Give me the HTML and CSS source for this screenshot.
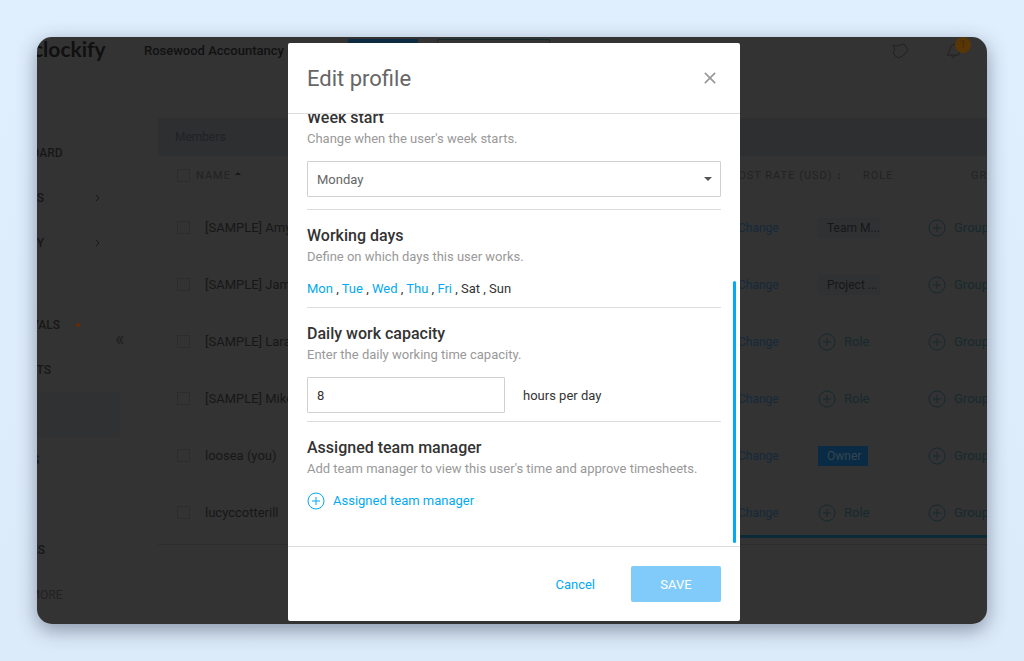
FILE: index.html
```html
<!DOCTYPE html>
<html lang="en">
<head>
  <meta charset="UTF-8" />
  <meta name="viewport" content="width=device-width, initial-scale=1.0" />
  <title>Edit profile</title>
  <link rel="stylesheet" href="styles.css">
</head>
<body>
  <!-- shared icons -->
  <svg class="sprite" aria-hidden="true">
    <symbol id="plus" viewBox="0 0 18 18">
      <circle cx="9" cy="9" r="8" />
      <path d="M9 5v8M5 9h8" />
    </symbol>
    <symbol id="chevron" viewBox="0 0 6 10">
      <path d="M1 2l3 3-3 3" />
    </symbol>
  </svg>

  <div class="window">
    <header class="topbar">
      <span class="logo">clockify</span>
      <span class="company">Rosewood Accountancy</span>
      <span class="promo"></span>
      <span class="trial"></span>
      <div class="topbar-icons">
        <svg class="icon" width="18" height="16" viewBox="0 0 18 16">
          <path d="M2 2l4 1 3-1 4-1 4 6-4 5-5 3-4-2-2-4 2-2z" />
        </svg>
        <div class="bell">
          <svg class="icon" width="14" height="16" viewBox="0 0 14 16">
            <path d="M1 12l2-3 2-6 4-2 4 8v3zM5 12l2 3 3-3" />
          </svg>
          <span class="badge">1</span>
        </div>
      </div>
    </header>

    <div class="app">
      <nav class="sidebar">
        <a href="#" class="nav-item">DASHBOARD</a>
        <a href="#" class="nav-item">REPORTS <svg class="chevron"><use href="#chevron" /></svg></a>
        <a href="#" class="nav-item">ACTIVITY <svg class="chevron"><use href="#chevron" /></svg></a>
        <a href="#" class="nav-item manage">APPROVALS <span class="dot"></span></a>
        <a href="#" class="nav-item">PROJECTS</a>
        <a href="#" class="nav-item active" aria-label="Team"></a>
        <a href="#" class="nav-item">CLIENTS</a>
        <a href="#" class="nav-item" aria-label="Tags"></a>
        <a href="#" class="nav-item">INVOICES</a>
        <a href="#" class="nav-item more">SHOW MORE</a>
        <span class="collapse">«</span>
      </nav>

      <main class="members">
        <div class="members-title">Members</div>
        <table>
          <thead>
            <tr>
              <th class="col-check"><input type="checkbox" aria-label="Select all" /></th>
              <th class="col-name">NAME <span class="sort"></span></th>
              <th class="col-rate">COST RATE (USD) ↕</th>
              <th class="col-role">ROLE</th>
              <th class="col-group">GROUP</th>
            </tr>
          </thead>
          <tbody>
            <tr>
              <td><input type="checkbox" aria-label="Select Amy" /></td>
              <td>[SAMPLE] Amy</td>
              <td><a href="#" class="change">Change</a></td>
              <td><span class="tag">Team M...</span></td>
              <td><a href="#" class="add"><svg><use href="#plus" /></svg>Group</a></td>
            </tr>
            <tr>
              <td><input type="checkbox" aria-label="Select James" /></td>
              <td>[SAMPLE] James</td>
              <td><a href="#" class="change">Change</a></td>
              <td><span class="tag">Project ...</span></td>
              <td><a href="#" class="add"><svg><use href="#plus" /></svg>Group</a></td>
            </tr>
            <tr>
              <td><input type="checkbox" aria-label="Select Lara" /></td>
              <td>[SAMPLE] Lara</td>
              <td><a href="#" class="change">Change</a></td>
              <td><a href="#" class="add"><svg><use href="#plus" /></svg>Role</a></td>
              <td><a href="#" class="add"><svg><use href="#plus" /></svg>Group</a></td>
            </tr>
            <tr>
              <td><input type="checkbox" aria-label="Select Mike" /></td>
              <td>[SAMPLE] Mike</td>
              <td><a href="#" class="change">Change</a></td>
              <td><a href="#" class="add"><svg><use href="#plus" /></svg>Role</a></td>
              <td><a href="#" class="add"><svg><use href="#plus" /></svg>Group</a></td>
            </tr>
            <tr>
              <td><input type="checkbox" aria-label="Select loosea" /></td>
              <td>loosea (you)</td>
              <td><a href="#" class="change">Change</a></td>
              <td><span class="tag owner">Owner</span></td>
              <td><a href="#" class="add"><svg><use href="#plus" /></svg>Group</a></td>
            </tr>
            <tr>
              <td><input type="checkbox" aria-label="Select lucyccotterill" /></td>
              <td>lucyccotterill</td>
              <td><a href="#" class="change">Change</a></td>
              <td><a href="#" class="add"><svg><use href="#plus" /></svg>Role</a></td>
              <td><a href="#" class="add"><svg><use href="#plus" /></svg>Group</a></td>
            </tr>
          </tbody>
        </table>
        <div class="table-scroll"></div>
      </main>
    </div>

    <div class="overlay">
      <form class="modal" role="dialog" aria-labelledby="modalTitle">
        <div class="modal-header">
          <h1 id="modalTitle">Edit profile</h1>
          <button type="button" class="close-btn" aria-label="Close">
            <svg width="14" height="14" viewBox="0 0 14 14"><path d="M1 1l12 12M13 1L1 13" /></svg>
          </button>
        </div>

        <div class="modal-body">
          <section class="week-start">
            <h2><label for="weekStart">Week start</label></h2>
            <p>Change when the user's week starts.</p>
            <div class="select-wrap">
              <select id="weekStart">
                <option>Monday</option>
              </select>
            </div>
          </section>

          <section>
            <h2>Working days</h2>
            <p>Define on which days this user works.</p>
            <div class="days">
              <a href="#">Mon</a> , <a href="#">Tue</a> , <a href="#">Wed</a> , <a href="#">Thu</a> , <a href="#">Fri</a> , <a href="#" class="off">Sat</a> , <a href="#" class="off">Sun</a>
            </div>
          </section>

          <section>
            <h2><label for="capacity">Daily work capacity</label></h2>
            <p>Enter the daily working time capacity.</p>
            <div class="capacity">
              <input type="text" id="capacity" value="8" />
              <span>hours per day</span>
            </div>
          </section>

          <section>
            <h2>Assigned team manager</h2>
            <p>Add team manager to view this user's time and approve timesheets.</p>
            <a href="#" class="assign"><svg><use href="#plus" /></svg>Assigned team manager</a>
          </section>
          <div class="scroll-thumb"></div>
        </div>

        <div class="modal-footer">
          <button type="button" class="cancel-btn">Cancel</button>
          <button type="submit" class="save-btn">SAVE</button>
        </div>
      </form>
    </div>
  </div>
</body>
</html>
```

FILE: styles.css
```css
* {
  box-sizing: border-box;
}

body {
  margin: 0;
  min-height: 100vh;
  padding: 37px;
  display: flex;
  font-family: Roboto, "Liberation Sans", sans-serif;
  font-size: 13px;
  background: linear-gradient(#e0effd, #dcebf9);
}

a {
  color: inherit;
  text-decoration: none;
}

svg {
  fill: none;
  stroke: currentColor;
}

.sprite {
  position: absolute;
  width: 0;
  height: 0;
}

.window {
  position: relative;
  flex: 1;
  min-width: 0;
  overflow: hidden;
  border-radius: 15px;
  background: #333;
  color: #171717;
  box-shadow: 0 6px 20px rgba(30, 40, 70, 0.45);
}

/* top bar */
.topbar {
  display: flex;
  align-items: center;
  height: 27px;
  margin-left: -4px;
  padding-right: 16px;
}

.logo {
  width: 111px;
  font-family: Lato, sans-serif;
  font-size: 21px;
  font-weight: 700;
  line-height: 22px;
  padding-bottom: 3px;
  color: #101010;
}

.company {
  width: 204px;
  font-weight: 500;
  color: #111;
}

.promo {
  width: 70px;
  height: 24px;
  background: #0c2a40;
}

.trial {
  width: 113px;
  height: 24px;
  margin-left: 19px;
  border: 1px solid #172b2e;
}

.topbar-icons {
  display: flex;
  align-items: center;
  gap: 37px;
  margin-left: auto;
  color: #222;
}

.icon {
  display: block;
}

.bell {
  position: relative;
  width: 25px;
}

.badge {
  position: absolute;
  top: -6px;
  right: 0;
  width: 16px;
  height: 16px;
  border-radius: 50%;
  background: #593606;
  color: #452b0a;
  font-size: 10px;
  line-height: 16px;
  text-align: center;
}

/* sidebar */
.app {
  display: flex;
}

.sidebar {
  position: relative;
  flex: none;
  width: 121px;
  padding-top: 66px;
}

.nav-item {
  display: flex;
  align-items: center;
  height: 45px;
  width: 83px;
  white-space: nowrap;
  font-weight: 500;
  font-size: 12px;
  text-indent: -45px;
}

.nav-item.manage {
  margin-top: 37px;
}

.nav-item.active {
  background: #2f3133;
}

.nav-item.more {
  color: #222;
  font-weight: 400;
}

.chevron {
  width: 6px;
  height: 10px;
  margin-left: auto;
  margin-right: 19px;
}

.dot {
  width: 4px;
  height: 4px;
  margin-left: auto;
  margin-right: 40px;
  border-radius: 50%;
  background: #6b2a08;
}

.collapse {
  position: absolute;
  top: 263px;
  left: 78px;
  font-size: 20px;
  color: #1f1f1f;
}

/* members table */
.members {
  flex: 1;
  min-width: 0;
  padding-top: 54px;
}

.members-title {
  height: 38px;
  padding-left: 17px;
  line-height: 38px;
  font-size: 12px;
  background: #2d2f31;
  color: #202224;
}

table {
  width: 100%;
  table-layout: fixed;
  border-collapse: collapse;
}

th {
  height: 43px;
  padding: 0 0 4px;
  font-size: 11px;
  font-weight: 400;
  letter-spacing: 1px;
  text-align: left;
  white-space: nowrap;
  color: #222;
}

td {
  height: 57px;
  padding: 0;
  white-space: nowrap;
}

.col-check {
  width: 47px;
}

.col-rate {
  width: 88px;
}

.col-role {
  width: 110px;
  padding-left: 45px;
}

.col-group {
  width: 59px;
  padding-left: 43px;
}

th.col-name {
  text-indent: -9px;
}

.sort {
  display: inline-block;
  margin-bottom: 4px;
  border: 3px solid transparent;
  border-top: 0;
  border-bottom-color: #181818;
}

td input,
th input {
  appearance: none;
  display: block;
  width: 13px;
  height: 13px;
  margin: 0 0 0 19px;
  border: 1px solid #2c2c2c;
}

.change {
  padding-left: 8px;
  font-size: 12px;
  color: #15293a;
}

.tag {
  display: inline-block;
  width: 62px;
  padding: 0 9px;
  line-height: 20px;
  font-size: 12px;
  background: #2f3133;
}

.tag.owner {
  width: 50px;
  background: #0a2b45;
  color: #35454f;
}

.add {
  display: flex;
  align-items: center;
  gap: 8px;
  color: #17292f;
}

.add svg,
.assign svg {
  flex: none;
  width: 18px;
  height: 18px;
}

.table-scroll {
  width: 100%;
  height: 10px;
  margin-top: -6px;
  border-bottom: 1px solid #2d2d2d;
  background: linear-gradient(90deg, transparent 60%, #0c2a36 60%) no-repeat;
  background-size: 100% 3px;
}

/* modal */
.overlay {
  position: absolute;
  inset: 0;
  display: flex;
  align-items: center;
  justify-content: center;
  padding: 6px 0 3px 4px;
}

.modal {
  display: flex;
  flex-direction: column;
  width: 452px;
  height: 100%;
  border-radius: 2px;
  background: #fff;
  color: #333;
}

.modal-header {
  display: flex;
  align-items: center;
  justify-content: space-between;
  height: 71px;
  padding: 0 24px 0 19px;
  border-bottom: 1px solid #ddd;
}

h1 {
  margin: 0;
  font-size: 22px;
  font-weight: 400;
  color: #666;
}

button {
  border: 0;
  padding: 0;
  background: none;
  font-family: inherit;
  cursor: pointer;
}

.close-btn {
  height: 12px;
  color: #999;
}

.close-btn svg {
  display: block;
  width: 12px;
  height: 12px;
  stroke-width: 2;
}

.modal-body {
  position: relative;
  flex: 1;
  overflow: hidden;
  padding: 0 19px;
}

section {
  padding: 14px 0 8px;
  border-bottom: 1px solid #ddd;
}

section:nth-of-type(4) {
  border-bottom: 0;
}

.week-start {
  margin-top: -22px;
  padding-bottom: 12px;
}

h2 {
  margin: 0;
  font-size: 16px;
  font-weight: 500;
  line-height: 24px;
}

section p {
  margin: 0 0 13px;
  line-height: 18px;
  color: #999;
}

.select-wrap {
  position: relative;
}

.select-wrap::after {
  content: "";
  position: absolute;
  top: 16px;
  right: 9px;
  border: 4px solid transparent;
  border-top-color: #555;
  border-bottom: 0;
}

select,
.capacity input {
  appearance: none;
  display: block;
  height: 36px;
  padding: 0 9px;
  border: 1px solid #d0d0d0;
  border-radius: 1px;
  background: #fff;
  font-family: inherit;
  font-size: 13px;
  color: #666;
}

select {
  width: 100%;
}

.days {
  line-height: 20px;
}

.days a,
.assign {
  color: #03a9f4;
}

.days .off {
  color: inherit;
}

.capacity {
  display: flex;
  align-items: center;
  gap: 18px;
}

.capacity input {
  width: 198px;
  color: #333;
}

.assign {
  display: flex;
  align-items: center;
  gap: 8px;
  line-height: 20px;
}

.scroll-thumb {
  position: absolute;
  right: 4px;
  bottom: 3px;
  width: 3px;
  height: 262px;
  border-radius: 2px;
  background: #03a9f4;
}

.modal-footer {
  display: flex;
  align-items: center;
  justify-content: flex-end;
  gap: 36px;
  height: 75px;
  padding: 0 19px;
  border-top: 1px solid #ddd;
}

.cancel-btn {
  font-size: 13px;
  color: #03a9f4;
}

.save-btn {
  width: 90px;
  height: 36px;
  border-radius: 2px;
  background: #81cbfb;
  color: #fff;
  font-size: 13px;
}
```
